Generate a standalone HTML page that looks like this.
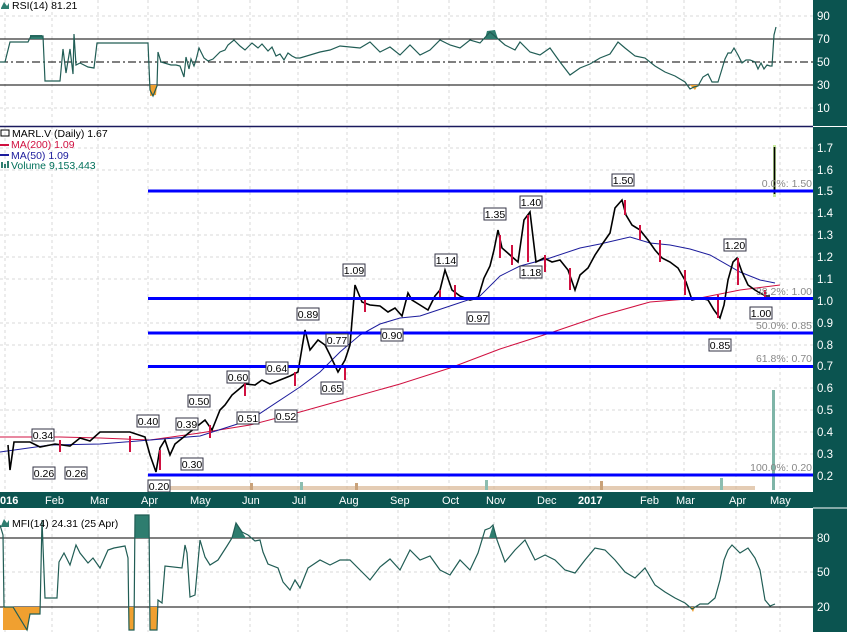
<!DOCTYPE html>
<html><head><meta charset="utf-8"><style>
html,body{margin:0;padding:0;background:#fff;width:847px;height:632px;overflow:hidden}
svg{display:block;font-family:"Liberation Sans",sans-serif}
.ns{vector-effect:non-scaling-stroke;fill:none}
</style></head><body>
<svg width="847" height="632" viewBox="0 0 847 632" xmlns="http://www.w3.org/2000/svg">
<rect x="0" y="0" width="847" height="632" fill="#fff"/>
<g stroke="#d8d8d8" stroke-dasharray="3,3" stroke-width="1">
<line x1="5" y1="0" x2="5" y2="632"/><line x1="52" y1="0" x2="52" y2="632"/><line x1="98" y1="0" x2="98" y2="632"/><line x1="148" y1="0" x2="148" y2="632"/><line x1="198" y1="0" x2="198" y2="632"/><line x1="250" y1="0" x2="250" y2="632"/><line x1="298" y1="0" x2="298" y2="632"/><line x1="347" y1="0" x2="347" y2="632"/><line x1="398" y1="0" x2="398" y2="632"/><line x1="449" y1="0" x2="449" y2="632"/><line x1="494" y1="0" x2="494" y2="632"/><line x1="546" y1="0" x2="546" y2="632"/><line x1="590" y1="0" x2="590" y2="632"/><line x1="647" y1="0" x2="647" y2="632"/><line x1="684" y1="0" x2="684" y2="632"/><line x1="736" y1="0" x2="736" y2="632"/><line x1="780" y1="0" x2="780" y2="632"/>
<line x1="0" y1="16" x2="813" y2="16"/><line x1="0" y1="108" x2="813" y2="108"/>
<line x1="0" y1="148" x2="813" y2="148"/><line x1="0" y1="170" x2="813" y2="170"/><line x1="0" y1="213" x2="813" y2="213"/><line x1="0" y1="235" x2="813" y2="235"/><line x1="0" y1="257" x2="813" y2="257"/><line x1="0" y1="279" x2="813" y2="279"/><line x1="0" y1="323" x2="813" y2="323"/><line x1="0" y1="345" x2="813" y2="345"/><line x1="0" y1="388" x2="813" y2="388"/><line x1="0" y1="410" x2="813" y2="410"/><line x1="0" y1="432" x2="813" y2="432"/><line x1="0" y1="454" x2="813" y2="454"/>
<line x1="0" y1="572" x2="813" y2="572"/>
</g>
<line x1="0" y1="39" x2="813" y2="39" stroke="#000"/>
<line x1="0" y1="85" x2="813" y2="85" stroke="#000"/>
<line x1="0" y1="62" x2="813" y2="62" stroke="#000" stroke-dasharray="8,3,2,3"/>
<polygon points="30,35 42,35 43,39 30,39" fill="#2e7d6f"/>
<polygon points="487,31 495,30 498,39 485,39" fill="#2e7d6f"/>
<polygon points="150,85 157,85 156,95 150,96" fill="#f0a030"/>
<polygon points="690,85 698,85 695,90" fill="#f0a030"/>
<polyline fill="none" stroke="#215d55" stroke-width="1.2" points="0,62 5,62 10,42 28,42 31,36 43,36 45,81 60,81 63,49 66,73 70,49 73,74 74,34 76,65 80,63 88,67 94,68 97,43 148,43 150,90 153,96 157,86 158,52 161,62 171,65 176,65 180,66 184,77 186,57 189,69 191,59 194,66 196,60 199,48 204,58 208,61 213,59 220,52 225,50 228,45 234,40 240,46 245,50 252,43 258,48 262,44 268,51 272,47 276,56 280,54 284,60 288,53 292,56 296,58 300,58 320,52 330,50 340,46 360,48 370,42 380,52 390,47 400,55 410,45 420,55 430,50 440,40 450,45 460,48 470,40 480,43 490,32 497,38 505,45 515,50 520,42 530,52 540,55 550,48 560,62 570,75 580,68 590,64 600,58 610,54 618,42 625,48 635,56 645,58 655,66 665,72 675,76 685,82 690,89 694,87 698,86 703,77 708,74 712,82 718,82 722,69 725,59 728,53 731,53 734,48 738,55 742,63 746,60 750,60 755,62 758,69 761,63 764,69 767,65 770,66 772,66 774,35 776,27"/>
<line x1="0" y1="126.5" x2="813" y2="126.5" stroke="#1a1a5e" stroke-width="1.5"/>
<g fill="#c9a27a">
<rect x="155" y="486" width="600" height="4" fill="#d9b694" opacity="0.7"/>
<rect x="250" y="483" width="3" height="7"/><rect x="300" y="482" width="3" height="8" fill="#8cbdb0"/><rect x="355" y="483" width="3" height="7"/><rect x="485" y="480" width="3" height="10" fill="#8cbdb0"/><rect x="600" y="481" width="3" height="9"/><rect x="720" y="478" width="3" height="12" fill="#8cbdb0"/>
</g>
<rect x="772" y="390" width="3" height="100" fill="#7fb5a8"/>
<polyline class="ns" stroke="#d01040" stroke-width="1" points="0,437 60,437 100,438 150,440 200,433 250,425 300,412 350,398 400,384 450,368 500,349 550,333 600,316 650,302 700,298 740,290 780,285"/>
<polyline class="ns" stroke="#1c1c9c" stroke-width="1" points="0,452 50,445 100,444 150,440 200,436 250,420 300,387 320,372 340,352 360,335 380,324 400,318 420,316 450,306 480,296 500,276 520,266 550,258 580,248 600,244 630,237 650,243 670,245 690,249 710,255 740,272 760,280 775,283"/>
<polyline class="ns" stroke="#000" stroke-width="1.6" points="8,445 10,470 14,442 30,442 40,447 55,444 70,446 80,438 90,441 100,432 130,432 145,437 150,455 156,472 160,448 165,440 170,455 175,444 180,440 190,432 195,428 205,420 212,430 220,410 225,405 232,395 238,390 245,384 255,385 262,380 270,384 280,380 290,376 298,372 305,330 310,350 318,340 325,345 330,355 338,372 345,360 350,345 355,285 362,302 370,305 380,306 388,312 395,308 402,316 408,293 412,300 420,305 428,310 435,296 440,290 445,270 452,290 460,296 470,300 478,298 484,278 490,266 494,250 498,230 502,248 510,255 518,262 524,220 530,212 536,262 544,258 552,262 560,260 568,270 575,290 580,275 588,268 595,255 603,243 610,233 615,208 622,200 626,215 632,225 640,230 648,240 655,250 662,258 670,262 678,268 686,282 692,300 700,298 708,300 714,310 720,318 724,305 728,280 733,262 737,258 742,272 748,285 755,290 760,293 766,296 770,296"/>
<g stroke="#d01040" stroke-width="2" fill="none">
<line x1="60" y1="440" x2="60" y2="452"/><line x1="130" y1="436" x2="130" y2="452"/><line x1="160" y1="450" x2="160" y2="470"/><line x1="210" y1="425" x2="210" y2="438"/><line x1="245" y1="382" x2="245" y2="396"/><line x1="295" y1="372" x2="295" y2="386"/><line x1="345" y1="365" x2="345" y2="380"/><line x1="365" y1="300" x2="365" y2="312"/><line x1="440" y1="290" x2="440" y2="300"/><line x1="455" y1="285" x2="455" y2="300"/><line x1="500" y1="235" x2="500" y2="258"/><line x1="512" y1="245" x2="512" y2="265"/><line x1="528" y1="215" x2="528" y2="262"/><line x1="545" y1="255" x2="545" y2="272"/><line x1="570" y1="268" x2="570" y2="290"/><line x1="625" y1="200" x2="625" y2="215"/><line x1="640" y1="225" x2="640" y2="240"/><line x1="660" y1="240" x2="660" y2="262"/><line x1="685" y1="270" x2="685" y2="295"/><line x1="718" y1="295" x2="718" y2="318"/><line x1="738" y1="258" x2="738" y2="285"/><line x1="765" y1="290" x2="765" y2="298"/>
</g>
<rect x="773" y="145" width="3" height="52" fill="#c8eaa0"/>
<line x1="774.5" y1="147" x2="774.5" y2="194" stroke="#000" stroke-width="1.6"/>
<g stroke="#0000ff" stroke-width="3">
<line x1="148" y1="191" x2="813" y2="191"/><line x1="148" y1="298.5" x2="813" y2="298.5"/><line x1="148" y1="333" x2="813" y2="333"/><line x1="148" y1="366.5" x2="813" y2="366.5"/><line x1="148" y1="475" x2="813" y2="475"/>
</g>
<g fill="#888" font-size="10.5" text-anchor="end">
<text x="812" y="187">0.0%: 1.50</text><text x="812" y="295">38.2%: 1.00</text><text x="812" y="329">50.0%: 0.85</text><text x="812" y="362">61.8%: 0.70</text><text x="812" y="471">100.0%: 0.20</text>
</g>
<g font-size="10.5" fill="#000" text-anchor="middle">
<g fill="#fff" stroke="#334" stroke-width="1">
<rect x="32" y="429" width="22" height="12"/><rect x="33" y="467" width="22" height="12"/><rect x="65" y="467" width="22" height="12"/><rect x="137" y="415" width="22" height="12"/><rect x="148" y="480" width="22" height="12"/><rect x="176" y="418" width="22" height="12"/><rect x="181" y="458" width="22" height="12"/><rect x="188" y="395" width="22" height="12"/><rect x="227" y="371" width="22" height="12"/><rect x="237" y="412" width="22" height="12"/><rect x="266" y="362" width="22" height="12"/><rect x="275" y="410" width="22" height="12"/><rect x="297" y="308" width="22" height="12"/><rect x="326" y="334" width="22" height="12"/><rect x="321" y="382" width="22" height="12"/><rect x="343" y="264" width="22" height="12"/><rect x="381" y="329" width="22" height="12"/><rect x="435" y="254" width="22" height="12"/><rect x="467" y="312" width="22" height="12"/><rect x="484" y="208" width="22" height="12"/><rect x="520" y="196" width="22" height="12"/><rect x="520" y="266" width="22" height="12"/><rect x="612" y="174" width="22" height="12"/><rect x="724" y="239" width="22" height="12"/><rect x="750" y="307" width="22" height="12"/><rect x="709" y="339" width="22" height="12"/>
</g>
<text x="43" y="439">0.34</text><text x="44" y="477">0.26</text><text x="76" y="477">0.26</text><text x="148" y="425">0.40</text><text x="159" y="490">0.20</text><text x="187" y="428">0.39</text><text x="192" y="468">0.30</text><text x="199" y="405">0.50</text><text x="238" y="381">0.60</text><text x="248" y="422">0.51</text><text x="277" y="372">0.64</text><text x="286" y="420">0.52</text><text x="308" y="318">0.89</text><text x="337" y="344">0.77</text><text x="332" y="392">0.65</text><text x="354" y="274">1.09</text><text x="392" y="339">0.90</text><text x="446" y="264">1.14</text><text x="478" y="322">0.97</text><text x="495" y="218">1.35</text><text x="531" y="206">1.40</text><text x="531" y="276">1.18</text><text x="623" y="184">1.50</text><text x="735" y="249">1.20</text><text x="761" y="317">1.00</text><text x="720" y="349">0.85</text>
</g>
<g font-size="10.5">
<path d="M1,8 L4,2 L7,6 L9,3 L9,9 L1,9Z" fill="#2e7d6f"/>
<text x="12" y="9" fill="#000">RSI(14) 81.21</text>
<text x="12" y="137" fill="#000">MARL.V (Daily) 1.67</text>
<rect x="1" y="130" width="8" height="6" fill="none" stroke="#000"/>
<line x1="0" y1="145" x2="9" y2="145" stroke="#d01040" stroke-width="2"/><text x="11" y="148" fill="#d01040">MA(200) 1.09</text>
<line x1="0" y1="155" x2="9" y2="155" stroke="#1c1c9c" stroke-width="2"/><text x="11" y="159" fill="#1c1c9c">MA(50) 1.09</text>
<rect x="1" y="162" width="2" height="6" fill="#2e7d6f"/><rect x="4" y="164" width="2" height="4" fill="#2e7d6f"/><rect x="7" y="161" width="2" height="7" fill="#2e7d6f"/><text x="11" y="169" fill="#00705a">Volume 9,153,443</text>
</g>
<rect x="0" y="492" width="847" height="16" fill="#0b5450"/>
<g fill="#fff" font-size="11">
<text x="0" y="504" font-weight="bold">016</text><text x="45" y="504">Feb</text><text x="90" y="504">Mar</text><text x="141" y="504">Apr</text><text x="190" y="504">May</text><text x="242" y="504">Jun</text><text x="292" y="504">Jul</text><text x="339" y="504">Aug</text><text x="390" y="504">Sep</text><text x="442" y="504">Oct</text><text x="486" y="504">Nov</text><text x="537" y="504">Dec</text><text x="578" y="504" font-weight="bold">2017</text><text x="640" y="504">Feb</text><text x="676" y="504">Mar</text><text x="729" y="504">Apr</text><text x="770" y="504">May</text>
</g>
<line x1="0" y1="538" x2="813" y2="538" stroke="#000"/>
<line x1="0" y1="607" x2="813" y2="607" stroke="#000"/>
<polygon points="3,607 13,607 13,630 3,630" fill="#f0a030"/>
<polygon points="13,607 40,607 40,614 30,614 28,630 13,630" fill="#f0a030"/>
<polygon points="129,607 134,607 134,630 129,630" fill="#f0a030"/>
<polygon points="150,607 157,607 157,630 150,630" fill="#f0a030"/>
<polygon points="135,538 135,515 149,515 149,538" fill="#2e7d6f"/>
<polygon points="232,538 236,523 242,532 246,538" fill="#2e7d6f"/>
<polygon points="489,538 493,525 497,538" fill="#2e7d6f"/>
<polygon points="690,607 695,607 693,612" fill="#f0a030"/>
<polyline fill="none" stroke="#215d55" stroke-width="1.2" points="0,525 3,535 4,607 13,607 27,630 30,614 40,614 42,520 45,598 57,598 59,562 64,553 70,565 76,545 80,553 88,563 93,558 100,568 108,550 114,548 125,546 128,558 129,630 134,630 135,515 149,515 150,630 157,630 158,600 162,603 165,566 182,568 185,545 187,553 190,597 195,595 200,540 205,557 210,565 218,560 227,546 232,538 236,523 242,532 248,535 255,541 260,540 263,552 268,564 278,568 283,582 290,590 295,580 300,588 308,568 320,560 330,565 340,560 350,560 360,570 370,580 380,567 390,559 400,570 410,550 420,560 430,556 440,570 450,575 460,560 470,570 478,553 485,530 490,528 493,525 497,540 505,562 515,550 525,540 535,560 545,555 555,560 565,570 575,573 585,560 595,548 605,550 615,560 625,572 635,578 645,568 655,585 665,592 675,598 685,603 692,609 700,604 708,604 715,598 720,580 724,560 728,550 732,545 740,553 748,548 755,558 760,570 765,600 770,606 775,604"/>
<rect x="813" y="0" width="34" height="632" fill="#0b5450"/>
<line x1="813" y1="126.5" x2="847" y2="126.5" stroke="#fff"/>
<line x1="813" y1="508" x2="847" y2="508" stroke="#fff"/>
<g fill="#fff" font-size="11.5">
<text x="817" y="20">90</text><text x="817" y="43">70</text><text x="817" y="66">50</text><text x="817" y="89">30</text><text x="817" y="112">10</text>
<text x="817" y="152">1.7</text><text x="817" y="174">1.6</text><text x="817" y="195">1.5</text><text x="817" y="217">1.4</text><text x="817" y="239">1.3</text><text x="817" y="261">1.2</text><text x="817" y="283">1.1</text><text x="817" y="305">1.0</text><text x="817" y="327">0.9</text><text x="817" y="349">0.8</text><text x="817" y="370">0.7</text><text x="817" y="392">0.6</text><text x="817" y="414">0.5</text><text x="817" y="436">0.4</text><text x="817" y="458">0.3</text><text x="817" y="480">0.2</text>
<text x="817" y="542">80</text><text x="817" y="576">50</text><text x="817" y="611">20</text>
</g>
<g font-size="10.5" fill="#000"><path d="M1,526 L4,519 L7,523 L9,520 L9,527 L1,527Z" fill="#2e7d6f"/><text x="12" y="527">MFI(14) 24.31 (25 Apr)</text></g>
</svg>
</body></html>
